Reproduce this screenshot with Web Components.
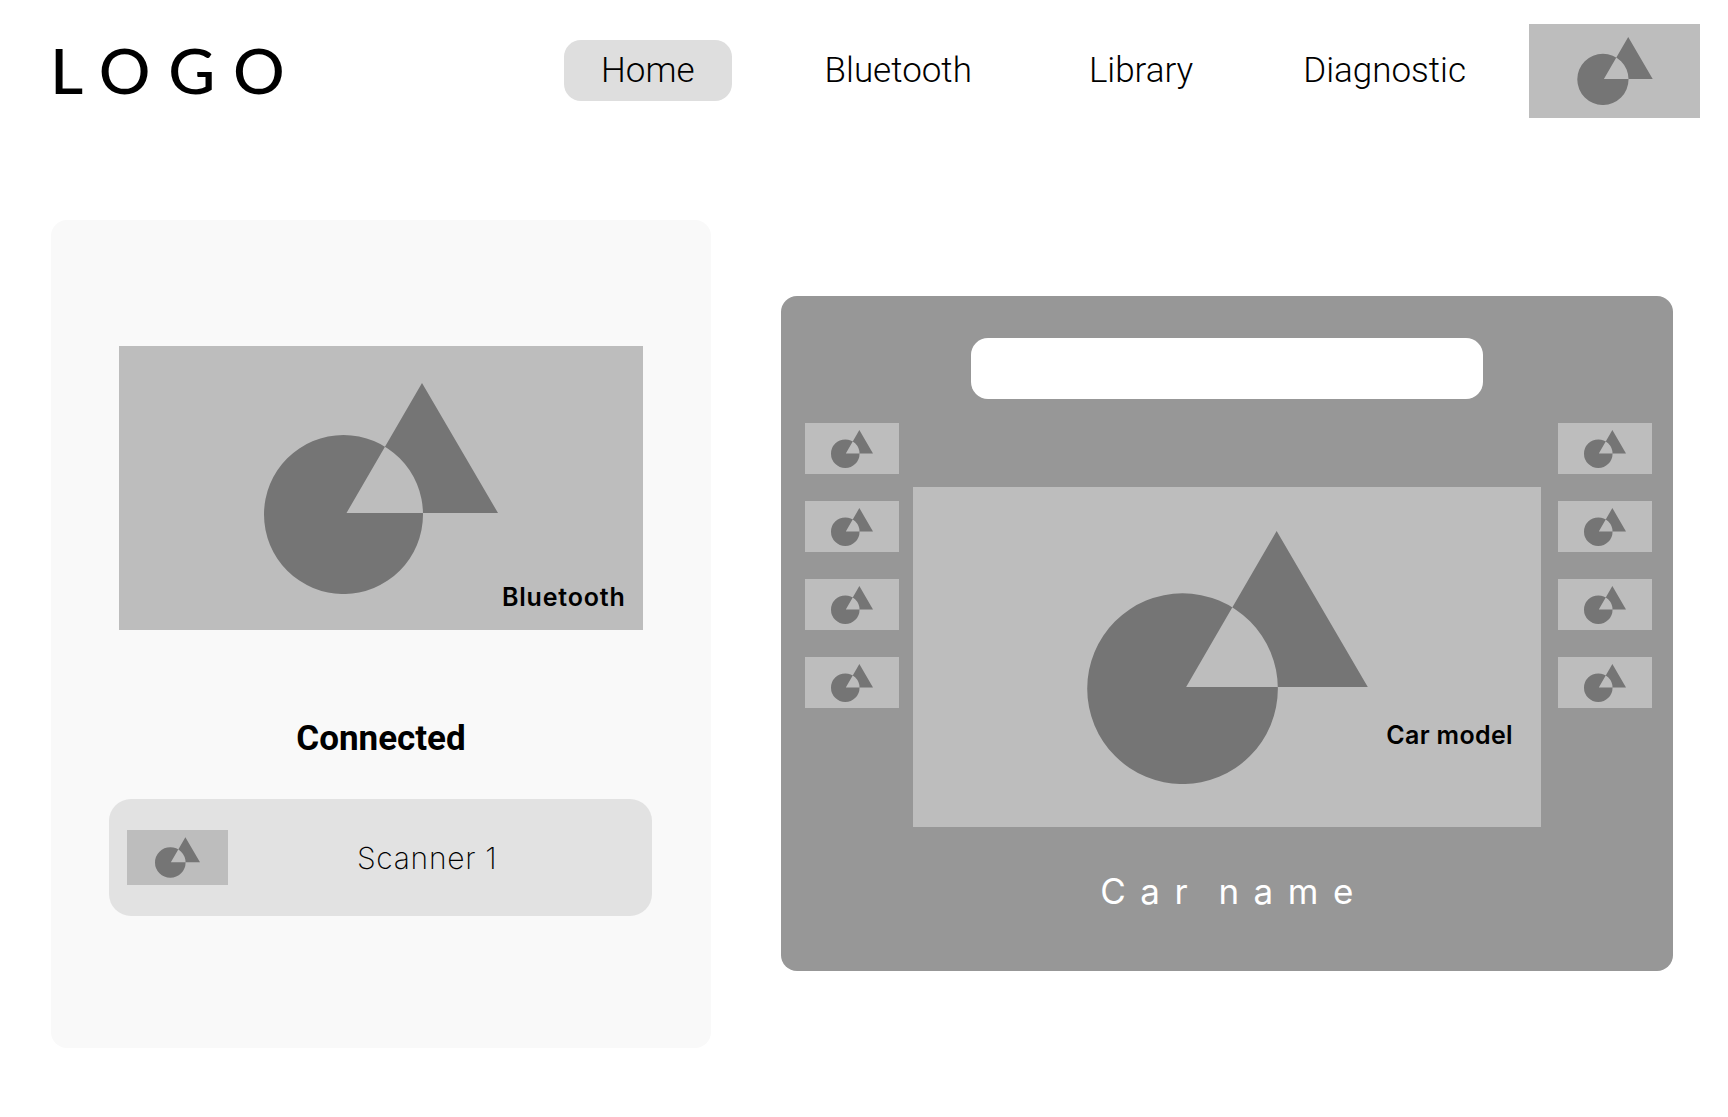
<!DOCTYPE html>
<html lang="en"><head><meta charset="utf-8"><title>Home</title>
<style>
html,body{margin:0;padding:0;background:#fff;}
body{width:1728px;height:1117px;overflow:hidden;font-family:"Inter","Liberation Sans",sans-serif;color:#000;}
</style></head><body>
<app-page></app-page>
<script>
function def(name, html){
  customElements.define(name, class extends HTMLElement{
    constructor(){super();this.attachShadow({mode:'open'}).innerHTML=html;}
  });
}
def('wf-picture',`<style>
:host{display:flex;align-items:center;justify-content:center;position:relative;background:#bdbdbd;flex:none;overflow:hidden;}
svg{display:block;width:var(--icon-w);height:var(--icon-h);}
.label{position:absolute;right:var(--label-r,16px);bottom:var(--label-b,16px);font:600 25px/1 "Inter","Liberation Sans",sans-serif;color:#000;white-space:nowrap;letter-spacing:var(--label-ls,0);}
</style><svg viewBox="0 0 234 211" aria-hidden="true"><path fill="#757575" fill-rule="evenodd" d="M158 0L234 130H82.5ZM0 131.5A79.5 79.5 0 1 0 159 131.5A79.5 79.5 0 1 0 0 131.5Z"/></svg><span class="label"><slot></slot></span>`);

def('nav-item',`<style>
:host{display:flex;align-items:center;justify-content:center;height:61px;padding:0 37px;border-radius:17px;font:300 35px/1 "Roboto","Liberation Sans",sans-serif;color:#000;white-space:nowrap;flex:none;}
:host([active]){background:#dedede;}
</style><slot></slot>`);

def('top-bar',`<style>
:host{display:flex;align-items:center;height:142px;box-sizing:border-box;padding:0 28px 0 50px;}
.logo{font:500 62px/1 "Lato","Inter",sans-serif;letter-spacing:17px;flex:none;color:#000;transform:scaleX(1.04);transform-origin:left center;margin-bottom:3px;}
nav{display:flex;align-items:center;margin-left:auto;margin-bottom:1px;}
.b{margin-left:56px}.l{margin-left:43px}.d{margin-left:36px}
wf-picture{width:171px;height:94px;margin-left:26px;--icon-w:76px;--icon-h:68px;}
</style><div class="logo">LOGO</div><nav><nav-item active>Home</nav-item><nav-item class="b">Bluetooth</nav-item><nav-item class="l">Library</nav-item><nav-item class="d">Diagnostic</nav-item></nav><wf-picture></wf-picture>`);

def('scan-item',`<style>
:host{display:flex;align-items:center;height:117px;box-sizing:border-box;padding:0 18px;border-radius:22px;background:#e2e2e2;}
wf-picture{width:101px;height:55px;--icon-w:45px;--icon-h:41px;}
.t{margin-left:129px;font:250 30px/1 "Inter","Liberation Sans",sans-serif;letter-spacing:.7px;color:#000;white-space:nowrap;}
</style><wf-picture></wf-picture><span class="t"><slot></slot></span>`);

def('device-card',`<style>
:host{display:flex;flex-direction:column;align-items:center;width:660px;height:828px;box-sizing:border-box;padding-top:126px;background:#f9f9f9;border-radius:16px;flex:none;}
wf-picture{width:524px;height:284px;--icon-w:234px;--icon-h:211px;--label-r:17.5px;--label-b:20px;--label-ls:.8px;}
h2{margin:88px 0 0;font:700 35px/42px "Roboto","Liberation Sans",sans-serif;color:#000;}
scan-item{width:543px;margin-top:39px;align-self:flex-start;margin-left:58px;}
</style><wf-picture>Bluetooth</wf-picture><h2>Connected</h2><scan-item>Scanner 1</scan-item>`);

def('thumb-column',`<style>
:host{display:flex;flex-direction:column;gap:27px;flex:none;width:94px;}
wf-picture{width:94px;height:51px;--icon-w:42px;--icon-h:38px;}
</style><wf-picture></wf-picture><wf-picture></wf-picture><wf-picture></wf-picture><wf-picture></wf-picture>`);

def('car-panel',`<style>
:host{display:flex;flex-direction:column;align-items:center;width:892px;height:675px;box-sizing:border-box;padding-top:42px;background:#979797;border-radius:16px;flex:none;}
.search{width:512px;height:61px;background:#fff;border-radius:17px;flex:none;}
.row{display:flex;align-self:stretch;margin-top:24px;padding-left:24px;}
.center{display:flex;flex-direction:column;align-items:center;margin:64px 17px 0 14px;width:628px;flex:none;}
wf-picture{width:628px;height:340px;--icon-w:281px;--icon-h:253px;--label-r:28px;--label-b:79px;--label-ls:.35px;}
.name{margin-top:42px;padding-left:14px;font:400 35px/44px "Inter","Liberation Sans",sans-serif;letter-spacing:14.5px;word-spacing:-8px;color:#fff;white-space:pre;}
</style><div class="search"></div><div class="row"><thumb-column></thumb-column><div class="center"><wf-picture>Car model</wf-picture><div class="name">Car name</div></div><thumb-column></thumb-column></div>`);

def('app-page',`<style>
:host{display:block;width:1728px;height:1117px;}
main{display:flex;align-items:flex-start;padding:78px 0 0 51px;}
car-panel{margin:76px 0 0 70px;}
</style><top-bar></top-bar><main><device-card></device-card><car-panel></car-panel></main>`);
</script>
</body></html>
